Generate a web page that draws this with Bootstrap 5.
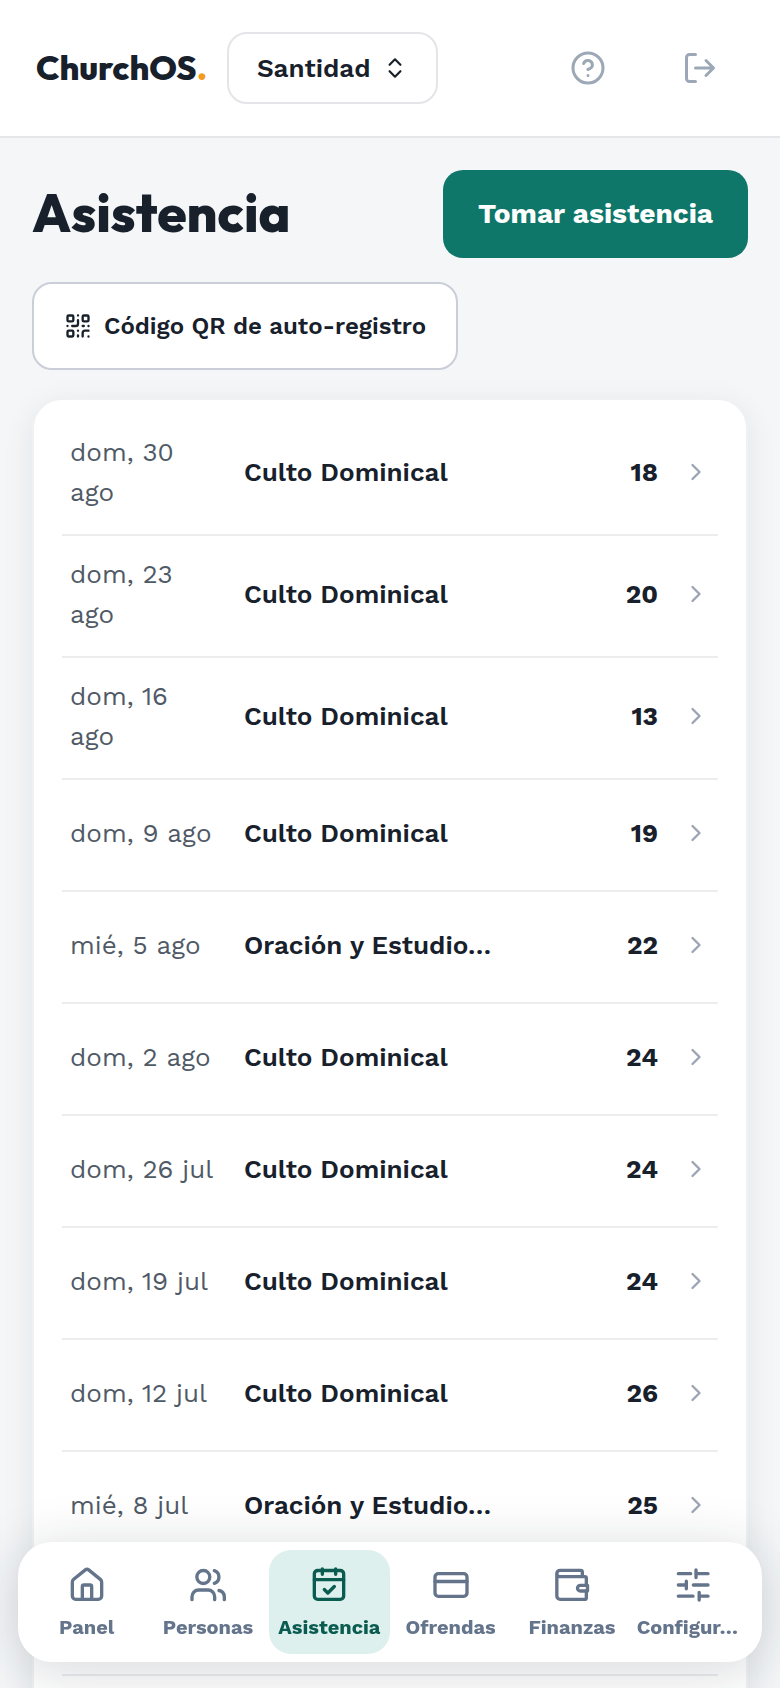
<!DOCTYPE html>
<html lang="es">
<head>
<meta charset="utf-8">
<meta name="viewport" content="width=device-width, initial-scale=1">
<title>Asistencia · ChurchOS</title>
<link href="https://cdn.jsdelivr.net/npm/bootstrap@5.3.0/dist/css/bootstrap.min.css" rel="stylesheet">
<style>
  :root {
    --ink: #17202b;
    --slate: #64748b;
    --teal: #0f766a;
    --line: #ecedef;
  }
  body {
    font-family: "Work Sans", Inter, "Liberation Sans", sans-serif;
    font-size: 26px;
    line-height: 40px;
    color: var(--ink);
    background: #f4f6f8;
  }
  svg { fill: none; stroke: currentColor; stroke-width: 2; stroke-linecap: round; stroke-linejoin: round; flex: none; }
  .display-face { font-family: Outfit, Lato, sans-serif; font-weight: 800; }
  .topbar { background: #fff; border-bottom: 2px solid #e4e6ea; padding: 32px 36px; flex: none; }
  .brand-link { font-size: 34px; margin-right: 20px; color: var(--ink); }
  .brand-dot { color: #f09c1c; }
  .btn-org {
    height: 72px; padding: 0 28px; border: 2px solid #e4e5e8; border-radius: 20px;
    background: #fff; font-size: 26px; font-weight: 600; color: var(--ink);
  }
  .btn-tool { width: 88px; height: 72px; color: #9ca8b6; }
  .page-body { padding: 32px; min-height: 0; scrollbar-width: none; }
  .page-body::-webkit-scrollbar { display: none; }
  .page-title { font-size: 53px; line-height: 60px; font-weight: 800; padding-bottom: 2px; }
  .btn-take, .btn-qr { height: 88px; border-radius: 20px; }
  .btn-take { padding: 0 34px; background: var(--teal); color: #fff; font-size: 28px; font-weight: 700; }
  .btn-qr { padding: 0 30px; background: #fff; border: 2px solid #c9ced9; color: var(--ink); font-size: 24px; font-weight: 600; }
  .sessions { margin-top: 28px; padding: 14px 28px; border: 2px solid #f0f1f3; border-radius: 30px; box-shadow: 0 8px 32px rgba(23, 32, 43, .08); }
  .session-row {
    min-height: 112px; padding: 18px 8px 22px; gap: 24px; color: var(--ink);
    border-bottom: 2px solid var(--line);
  }
  .session-date { width: 150px; color: #4f5a66; flex: none; }
  .session-name { font-weight: 600; }
  .session-count { font-weight: 700; }
  .session-row svg { color: #9ca3b2; }
  .tabbar {
    left: 18px; right: 18px; bottom: 26px; padding: 8px; background: #fff;
    border-radius: 34px; box-shadow: 0 8px 56px rgba(23, 32, 43, .18);
  }
  .tab-link {
    flex: 1 1 0; min-width: 0; height: 104px; gap: 8px; padding: 2px 4px 0; border-radius: 22px;
    color: var(--slate); font-size: 20px; line-height: 28px; font-weight: 700; text-decoration: none;
  }
  .tab-link.active { background: #def0ed; color: #0b5c50; }
  .tab-link span { max-width: 100%; }
</style>
</head>
<body class="vh-100 overflow-hidden d-flex flex-column">
<header class="topbar d-flex align-items-center">
  <a href="#" class="brand-link display-face text-decoration-none">ChurchOS<span class="brand-dot">.</span></a>
  <button type="button" class="btn btn-org d-flex align-items-center gap-2">Santidad
    <svg width="26" height="26" viewBox="0 0 24 24" class="ms-1"><path d="m7 15 5 5 5-5M7 9l5-5 5 5"/></svg>
  </button>
  <div class="ms-auto d-flex gap-4">
    <button type="button" class="btn btn-tool p-0" aria-label="Ayuda">
      <svg width="36" height="36" viewBox="0 0 24 24"><circle cx="12" cy="12" r="10"/><path d="M9.09 9a3 3 0 0 1 5.83 1c0 2-3 3-3 3M12 17h.01"/></svg>
    </button>
    <button type="button" class="btn btn-tool p-0" aria-label="Salir">
      <svg width="36" height="36" viewBox="0 0 24 24"><path d="M9 21H5a2 2 0 0 1-2-2V5a2 2 0 0 1 2-2h4M16 17l5-5-5-5M21 12H9"/></svg>
    </button>
  </div>
</header>

<main class="page-body flex-grow-1 overflow-auto">
  <div class="d-flex flex-wrap align-items-center justify-content-between gap-4">
    <h1 class="page-title display-face mb-0">Asistencia</h1>
    <button type="button" class="btn btn-take">Tomar asistencia</button>
    <button type="button" class="btn btn-qr d-flex align-items-center gap-2">
      <svg width="28" height="28" viewBox="0 0 24 24" class="me-1"><rect x="3" y="3" width="5" height="5" rx="1"/><rect x="16" y="3" width="5" height="5" rx="1"/><rect x="3" y="16" width="5" height="5" rx="1"/><path d="M21 16h-3a2 2 0 0 0-2 2v3M21 21v.01M12 7v3a2 2 0 0 1-2 2H7M3 12h.01M12 3h.01M12 16v.01M16 12h1M21 12v.01M12 21v-1"/></svg>
      Código QR de auto-registro
    </button>
  </div>

  <div class="sessions card" id="sessions"></div>
</main>

<nav class="tabbar position-fixed d-flex" aria-label="Principal">
  <a href="#" class="tab-link d-flex flex-column align-items-center justify-content-center">
    <svg width="40" height="40" viewBox="0 0 24 24"><path d="M11 2.900a1.600 1.600 0 0 1 2 0l7 5.700a2.200 2.200 0 0 1 .8 1.700v8.300a2 2 0 0 1-2 2H5.200a2 2 0 0 1-2-2v-8.300a2.200 2.200 0 0 1 .8-1.700z"/><path d="M9.200 20.600V13a1 1 0 0 1 1-1h3.600a1 1 0 0 1 1 1v7.600"/></svg>
    <span>Panel</span></a>
  <a href="#" class="tab-link d-flex flex-column align-items-center justify-content-center">
    <svg width="40" height="40" viewBox="0 0 24 24"><circle cx="9.200" cy="7.200" r="3.900"/><path d="M2.400 20.800V19a4 4 0 0 1 4-4H12a4 4 0 0 1 4 4v1.800M15.800 3.400a4 4 0 0 1 0 7.600M18.600 15.300a4 4 0 0 1 3.200 3.800v1.700"/></svg>
    <span>Personas</span></a>
  <a href="#" class="tab-link active d-flex flex-column align-items-center justify-content-center" aria-current="page">
    <svg width="40" height="40" viewBox="0 0 24 24"><rect x="3.200" y="3.300" width="17.600" height="17.300" rx="2"/><path d="M3.200 8.800h17.600M8 2.400v3.200M16 2.400v3.200M9.200 14.700l2.100 2.100 3.900-3.900"/></svg>
    <span>Asistencia</span></a>
  <a href="#" class="tab-link d-flex flex-column align-items-center justify-content-center">
    <svg width="40" height="40" viewBox="0 0 24 24"><rect x="2.400" y="5.200" width="19.200" height="13.600" rx="2"/><path d="M2.400 9.900h19.200"/></svg>
    <span>Ofrendas</span></a>
  <a href="#" class="tab-link d-flex flex-column align-items-center justify-content-center">
    <svg width="40" height="40" viewBox="0 0 24 24"><path d="M18.200 7V4.200a1 1 0 0 0-1-1H4.800a1.900 1.900 0 0 0 0 3.800h14.800a1 1 0 0 1 1 1v4M2.900 5v13.600a2 2 0 0 0 2 2h14.700a1 1 0 0 0 1-1v-4"/><path d="M21.300 12.200h-4.300a1.700 1.700 0 0 0 0 3.400h4.300z"/></svg>
    <span>Finanzas</span></a>
  <a href="#" class="tab-link d-flex flex-column align-items-center justify-content-center">
    <svg width="40" height="40" viewBox="0 0 24 24"><path d="M3.200 5.200h7.400M13.800 5.200H21M13.800 2.900v4.600M3.200 12H8M12.200 12H21M8 9.700v4.600M3.200 18.700H12M15.700 18.700H21M15.700 16.400V21"/></svg>
    <span class="w-100">Configur…</span></a>
</nav>

<script src="https://cdn.jsdelivr.net/npm/bootstrap@5.3.0/dist/js/bootstrap.bundle.min.js"></script>
<script>
  const sessions = [
    ["dom, 30 ago", "Culto Dominical", 18],
    ["dom, 23 ago", "Culto Dominical", 20],
    ["dom, 16 ago", "Culto Dominical", 13],
    ["dom, 9 ago", "Culto Dominical", 19],
    ["mié, 5 ago", "Oración y Estudio…", 22],
    ["dom, 2 ago", "Culto Dominical", 24],
    ["dom, 26 jul", "Culto Dominical", 24],
    ["dom, 19 jul", "Culto Dominical", 24],
    ["dom, 12 jul", "Culto Dominical", 26],
    ["mié, 8 jul", "Oración y Estudio…", 25],
    ["", "", ""],
    ["", "", ""]
  ];
  document.getElementById("sessions").innerHTML = sessions.map(([date, name, count]) => `
    <a href="#" class="session-row d-flex align-items-center text-decoration-none">
      <span class="session-date">${date}</span>
      <span class="session-name flex-grow-1 text-truncate">${name}</span>
      <span class="session-count">${count}</span>
      <svg width="28" height="28" viewBox="0 0 24 24"><path d="m9 18 6-6-6-6"/></svg>
    </a>`).join("");
</script>
</body>
</html>
